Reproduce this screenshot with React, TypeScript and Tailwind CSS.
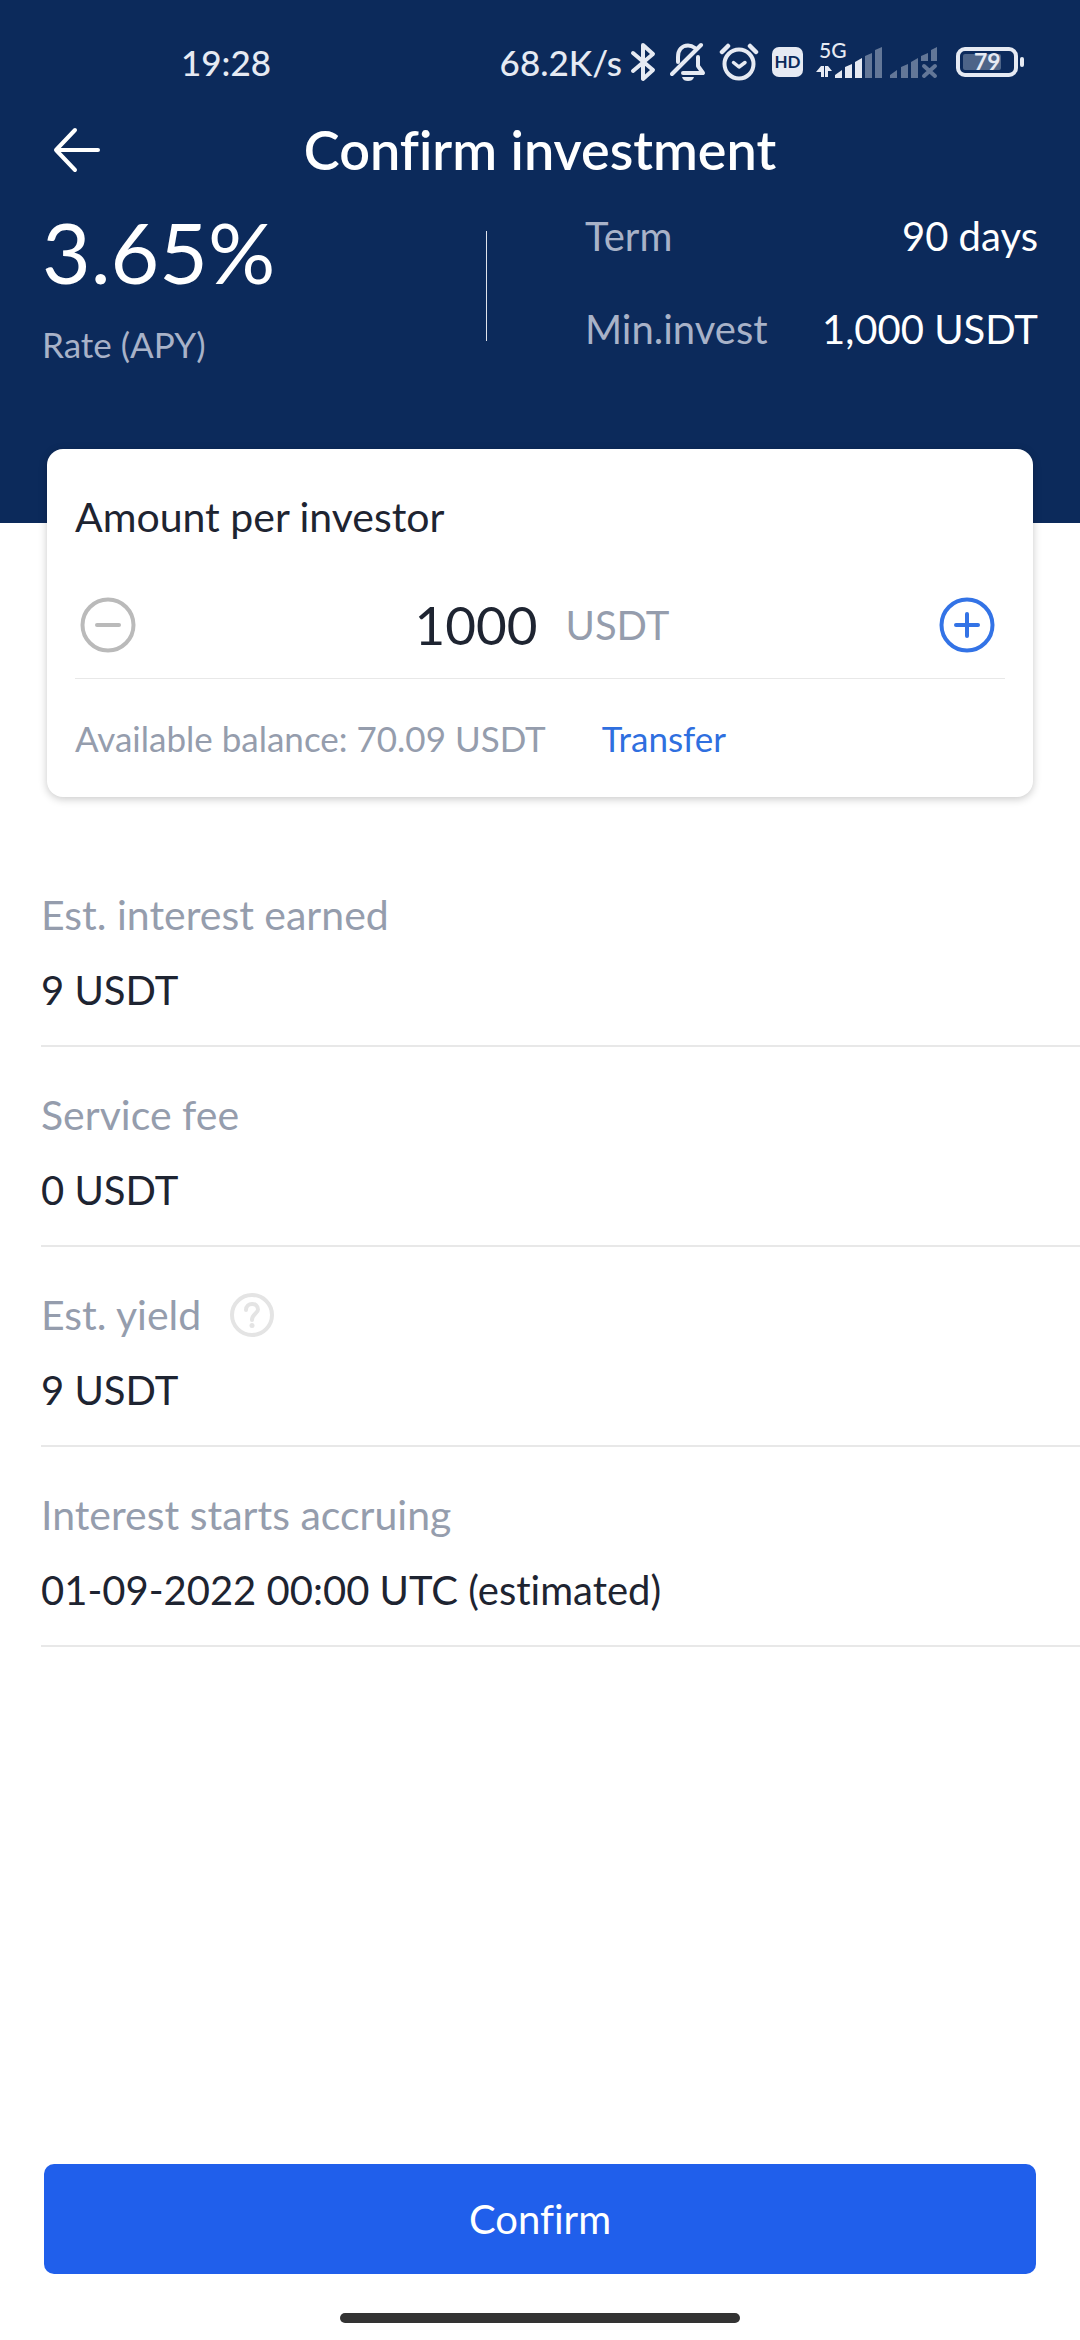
import { useState } from "react";

type Detail = {
  label: string;
  value: string;
  help?: boolean;
};

const MIN_INVEST = 1000;

const details: Detail[] = [
  { label: "Est. interest earned", value: "9 USDT" },
  { label: "Service fee", value: "0 USDT" },
  { label: "Est. yield", value: "9 USDT", help: true },
  { label: "Interest starts accruing", value: "01-09-2022 00:00 UTC (estimated)" },
];

function BluetoothIcon() {
  return (
    <svg width="26" height="40" viewBox="0 0 26 40" fill="none" stroke="currentColor" strokeWidth="4" strokeLinejoin="round" strokeLinecap="round" aria-hidden="true">
      <path d="M3 11 L23 28 L13 37 V3 L23 12 L3 29" />
    </svg>
  );
}

function BellOffIcon() {
  return (
    <svg width="36" height="40" viewBox="0 0 36 40" fill="none" stroke="currentColor" strokeWidth="4" strokeLinejoin="round" strokeLinecap="round" aria-hidden="true">
      <path d="M8 20 V15 C8 8 12 3.500 18 3.500 C20.500 3.500 23 4.500 25 6" />
      <path d="M28 15 V24 L33 31 H13" />
      <path d="M2 32 L31 3" />
      <path d="M12 35 H24 C23 38 21 39 18 39 C15 39 13 38 12 35 Z" fill="currentColor" stroke="none" />
    </svg>
  );
}

function AlarmIcon() {
  return (
    <svg width="40" height="40" viewBox="0 0 40 40" fill="none" stroke="currentColor" strokeWidth="4" strokeLinejoin="round" strokeLinecap="round" aria-hidden="true">
      <circle cx="20" cy="22" r="14.500" />
      <path d="M14.500 20.500 L20 25 L26 20.500" strokeWidth="3.500" />
      <path d="M3 10 L9 4" strokeWidth="4.500" />
      <path d="M37 10 L31 4" strokeWidth="4.500" />
    </svg>
  );
}

function SignalIcons() {
  return (
    <svg width="124" height="52" viewBox="0 -6 124 52" fill="currentColor" aria-label="5G signal">
      <text x="3" y="16" fontSize="21" fontWeight="500">5G</text>
      <path d="M5 24 H8 V35 H5 V30 H0 Z M9 24 H12 L16 29 H12 V35 H9 Z" />
      <path d="M19 33 L26 28 V36 H19 Z M29 25 L36 22 V36 H29 Z M39 20 L46 16 V36 H39 Z" />
      <g opacity="0.4">
        <path d="M49 14 L56 11 V36 H49 Z M59 8 L66 5 V36 H59 Z" />
        <path d="M74 33 L81 28 V36 H74 Z M85 25 L92 22 V36 H85 Z M95 20 L102 16 V36 H95 Z" />
        <path d="M105 14 L112 11 V19 H105 Z M115 8 L121 5 V19 H115 Z" />
        <path d="M108 24 L119 34 M119 24 L108 34" stroke="currentColor" strokeWidth="4" strokeLinecap="round" />
      </g>
    </svg>
  );
}

function BatteryIcon() {
  return (
    <svg width="70" height="32" viewBox="0 0 70 32" aria-label="Battery 79%">
      <rect x="2" y="3" width="58" height="26" rx="7" fill="none" stroke="currentColor" strokeWidth="4" />
      <rect x="7" y="8" width="38" height="16" rx="2" fill="currentColor" opacity="0.3" />
      <rect x="64" y="11" width="4" height="10" rx="2" fill="currentColor" />
      <text x="18" y="24" fontSize="23" fontWeight="700" fill="currentColor">79</text>
    </svg>
  );
}

function StatusBar() {
  return (
    <div className="flex h-[94px] items-center justify-between pt-[30px] pr-[54px] pl-[181px] text-[#e6eaf3]">
      <span className="text-[35px] leading-[44px] font-medium">19:28</span>
      <div className="flex items-center">
        <span className="mr-[8px] text-[35px] leading-[44px] font-medium">68.2K/s</span>
        <BluetoothIcon />
        <div className="ml-[14px] flex items-center gap-[13px]">
          <BellOffIcon />
          <AlarmIcon />
          <span className="flex h-[30px] w-[31px] items-center justify-center rounded-[7px] bg-[#e6eaf3] text-[17px] leading-[20px] font-bold text-[#0c2a5b]">
            HD
          </span>
          <SignalIcons />
        </div>
        <div className="ml-[16px]">
          <BatteryIcon />
        </div>
      </div>
    </div>
  );
}

function StepButton({
  label,
  plus,
  onClick,
}: {
  label: string;
  plus?: boolean;
  onClick: () => void;
}) {
  return (
    <button
      type="button"
      aria-label={label}
      onClick={onClick}
      className={plus ? "text-[#3373e6]" : "text-[#bababa]"}
    >
      <svg width="56" height="56" viewBox="0 0 56 56" fill="none" stroke="currentColor" strokeWidth="4" strokeLinecap="round">
        <circle cx="28" cy="28" r="25.500" />
        <path d="M17 28 H39" />
        {plus && <path d="M28 17 V39" />}
      </svg>
    </button>
  );
}

function DetailRow({ label, value, help }: Detail) {
  return (
    <div className="border-b-2 border-[#e8e8e8] pt-[43px] pb-[30px]">
      <dt className="flex h-[50px] items-center gap-[29px] text-[41px] text-[#959dad]">
        {label}
        {help && (
          <button type="button" aria-label="About estimated yield" className="text-[#e4e4e4]">
            <svg width="44" height="44" viewBox="0 0 44 44" fill="none" stroke="currentColor" strokeWidth="4" strokeLinecap="round" strokeLinejoin="round">
              <circle cx="22" cy="22" r="20" />
              <path d="M16 17 C16 9 28 9 28 16.500 C28 20.500 22 21 22 27" />
              <circle cx="22" cy="32.500" r="2.500" fill="currentColor" stroke="none" />
            </svg>
          </button>
        )}
      </dt>
      <dd className="mt-[25px] text-[#1e2431]">{value}</dd>
    </div>
  );
}

export default function App() {
  const [amount, setAmount] = useState(String(MIN_INVEST));

  function step(by: number) {
    setAmount((prev) => String(Math.max(MIN_INVEST, Number(prev) + by)));
  }

  return (
    <div className="flex min-h-screen flex-col bg-white font-['Lato','Open_Sans',sans-serif] text-[40px] leading-[50px] [font-variant-ligatures:none]">
      <header className="bg-[#0c2a5b] pb-[157px] text-white">
        <StatusBar />
        <div className="grid h-[112px] grid-cols-[100px_1fr_100px] items-center">
          <button type="button" aria-label="Back" className="justify-self-end">
            <svg width="48" height="46" viewBox="0 0 48 46" fill="none" stroke="currentColor" strokeWidth="4" strokeLinecap="round" strokeLinejoin="round">
              <path d="M46 23 H4 M23 3 L4 23 L23 43" />
            </svg>
          </button>
          <h1 className="text-center text-[54px] leading-[64px] font-semibold">Confirm investment</h1>
        </div>

        <section className="flex">
          <div className="w-[45%] pl-[42px]">
            <p className="text-[84px] leading-[92px]">3.65%</p>
            <p className="mt-[24px] text-[35px] leading-[44px] text-[#a8b2c8]">Rate (APY)</p>
          </div>
          <div className="mt-[25px] h-[110px] w-px bg-[#dfe3ec]" />
          <dl className="flex flex-1 flex-col gap-[43px] pt-[5px] pr-[42px] pl-[98px]">
            <div className="flex justify-between">
              <dt className="text-[#a8b2c8]">Term</dt>
              <dd>90 days</dd>
            </div>
            <div className="flex justify-between">
              <dt className="text-[#a8b2c8]">Min.invest</dt>
              <dd>1,000 USDT</dd>
            </div>
          </dl>
        </section>
      </header>

      <section className="mx-[47px] -mt-[74px] rounded-2xl bg-white px-[28px] pt-[43px] pb-[37px] shadow-[0_2px_8px_rgba(0,0,0,0.22)]">
        <label htmlFor="amount" className="block text-[41px] text-[#1e2431]">
          Amount per investor
        </label>
        <div className="mt-[55px] flex h-[82px] items-start border-b border-[#e8e8e8] pr-[10px] pl-[5px]">
          <StepButton label="Decrease amount" onClick={() => step(-100)} />
          <div className="grid flex-1 grid-cols-2">
            <input
              id="amount"
              inputMode="numeric"
              value={amount}
              onChange={(e) => setAmount(e.target.value)}
              className="h-[56px] w-full text-right text-[53px] leading-[56px] text-[#1e2431] outline-none"
            />
            <span className="pl-[28px] leading-[56px] text-[#959dad]">USDT</span>
          </div>
          <StepButton label="Increase amount" plus onClick={() => step(100)} />
        </div>
        <div className="mt-[37px] flex gap-[56px] text-[35px] leading-[44px]">
          <span className="text-[#959dad]">Available balance: 70.09 USDT</span>
          <a href="#transfer" className="text-[#2f6fdf]">
            Transfer
          </a>
        </div>
      </section>

      <dl className="mt-[50px] ml-[41px]">
        {details.map((item) => (
          <DetailRow key={item.label} {...item} />
        ))}
      </dl>

      <footer className="mt-auto px-[44px] pb-[17px]">
        <button type="button" className="block h-[110px] w-full rounded-[10px] bg-[#205feb] text-white">
          Confirm
        </button>
        <div className="mx-auto mt-[39px] h-[10px] w-[400px] rounded-full bg-[#333333]" />
      </footer>
    </div>
  );
}
